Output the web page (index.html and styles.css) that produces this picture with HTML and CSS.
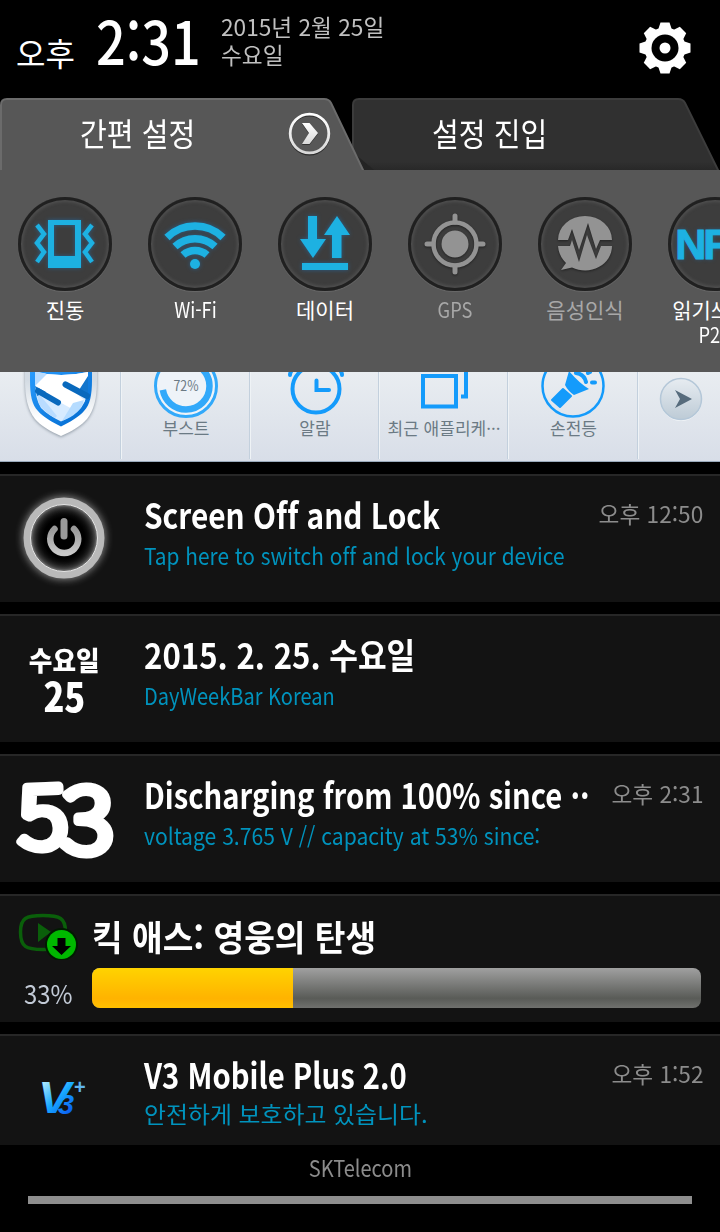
FILE: index.html
```html
<!DOCTYPE html>
<html lang="ko">
<head>
    <meta charset="UTF-8">
    <meta name="viewport" content="width=device-width, initial-scale=1.0">
    <title>알림</title>
    <link rel="stylesheet" href="styles.css">
</head>
<body>

    <header class="status">
        <span class="ampm">오후</span>
        <span class="clock">2:31</span>
        <div class="date">
            <div class="date-line">2015년 2월 25일</div>
            <div class="date-line">수요일</div>
        </div>
        <svg class="gear" width="52" height="52" viewBox="-26 -26 52 52">
            <g fill="#fff">
                <circle r="20.5"/>
                <g id="teeth">
                    <path d="M-7 -18L-4.5 -25.5H4.5L7 -18Z"/>
                    <path d="M-7 18L-4.5 25.5H4.5L7 18Z"/>
                    <path d="M-18 -7L-25.5 -4.5V4.5L-18 7Z"/>
                    <path d="M18 -7L25.5 -4.5V4.5L18 7Z"/>
                </g>
                <use href="#teeth" transform="rotate(45)"/>
            </g>
            <circle r="13.5"/>
            <circle r="5.5" fill="#fff"/>
        </svg>
    </header>

    <nav class="tabs">
        <svg class="tabs-bg" width="720" height="72" viewBox="0 0 720 72">
            <defs>
                <linearGradient id="tabShade" x1="0" y1="0" x2="0" y2="1">
                    <stop offset=".86" stop-color="#303030"/>
                    <stop offset="1" stop-color="#262626"/>
                </linearGradient>
                <linearGradient id="metal" x1="0" y1="0" x2="0" y2="1">
                    <stop offset="0" stop-color="#fff"/>
                    <stop offset="1" stop-color="#d8d8d8"/>
                </linearGradient>
            </defs>
            <path d="M353 74V7Q353 1 359 1H678Q683 1 685 5L719 74Z" fill="url(#tabShade)" stroke="#3c3c3c" stroke-width="2"/>
            <path d="M355 56L374 72H360Z" fill="#242424"/>
            <path d="M1 74V7Q1 1 7 1H324Q329 1 331 5L364 74Z" fill="#575757" stroke="#6b6b6b" stroke-width="2"/>
            <circle cx="309.500" cy="37" r="19.500" fill="none" stroke="#2c2c2c" stroke-width="2"/>
            <circle cx="309.500" cy="35.500" r="19.300" fill="none" stroke="url(#metal)" stroke-width="2.800"/>
            <path d="M302 26H309.500L318 36L309.500 47H302L309 36Z" fill="#333"/>
            <path d="M302 25H309.500L318 35L309.500 46H302L309 35Z" fill="url(#metal)"/>
        </svg>
        <a class="tab">간편 설정</a>
        <a class="tab">설정 진입</a>
    </nav>

    <section class="quick">
        <div class="toggle on">
            <div class="knob">
                <svg width="92" height="92" viewBox="-46 -46 92 92">
                    <path fill-rule="evenodd" d="M-17 -24H16V24H-17ZM-11 -19H10V12H-11Z"/>
                    <path class="line" d="M-28 -19L-21 -10L-28 -1L-21 8L-28 18M27 -19L20 -10L27 -1L20 8L27 18"/>
                </svg>
            </div>
            <span class="toggle-name">진동</span>
        </div>
        <div class="toggle on">
            <div class="knob">
                <svg width="92" height="92" viewBox="-46 -46 92 92">
                    <path class="wave" d="M-28 -6.500A40 40 0 0 1 28 -6.500M-20 2.500A29.500 29.500 0 0 1 20 2.500M-12 11A18 18 0 0 1 12 11"/>
                    <circle cy="20" r="5"/>
                </svg>
            </div>
            <span class="toggle-name latin">Wi-Fi</span>
        </div>
        <div class="toggle on">
            <div class="knob">
                <svg width="92" height="92" viewBox="-46 -46 92 92">
                    <path d="M-17 -28H-8V-5H1L-12 14L-25 -5H-17ZM12 -28L25 -9H16.500V14H7V-9H-1ZM-23 19H23V26H-23Z"/>
                </svg>
            </div>
            <span class="toggle-name">데이터</span>
        </div>
        <div class="toggle">
            <div class="knob">
                <svg width="92" height="92" viewBox="-46 -46 92 92">
                    <circle r="13.500"/>
                    <circle class="ring" r="21.500"/>
                    <path class="cross" d="M0 -28V-22M0 28V22M-28 0H-22M28 0H22"/>
                </svg>
            </div>
            <span class="toggle-name latin">GPS</span>
        </div>
        <div class="toggle">
            <div class="knob">
                <svg width="92" height="92" viewBox="-46 -46 92 92">
                    <path d="M-27 -4A27 24 0 0 1 27 -4H15L11 5L3 -21L-6 6L-13 -15L-17 -4Z"/>
                    <path d="M-27 2H-15L-13 -4L-6 18L2 -9L11 15L16 2H27A27 24.500 0 0 1 -13 23.500L-24 26L-19 19A27 27 0 0 1 -27 2Z"/>
                </svg>
            </div>
            <span class="toggle-name">음성인식</span>
        </div>
        <div class="toggle on">
            <div class="knob"><b class="nfc">NFC</b></div>
            <span class="toggle-name">읽기쓰기/</span>
            <span class="toggle-name second latin">P2P</span>
        </div>
    </section>

    <section class="widget">
        <div class="app shield">
            <svg width="121" height="90" viewBox="0 0 121 90">
                <defs>
                    <linearGradient id="rim" x1="0" y1="0" x2="0" y2="1">
                        <stop offset=".2" stop-color="#d3dbe3"/>
                        <stop offset=".75" stop-color="#fff"/>
                    </linearGradient>
                    <linearGradient id="blue" x1="0" y1="0" x2="1" y2="1">
                        <stop offset="0" stop-color="#2a9dff"/>
                        <stop offset="1" stop-color="#0068cc"/>
                    </linearGradient>
                </defs>
                <path class="rim" d="M25 -6H97V8C97 26 94 38 87 47C82 53 71 60 61 64C51 60 40 53 35 47C28 38 25 26 25 8Z" fill="url(#rim)"/>
                <path d="M30 -6H92V8C92 23 90 33 84 39C79 45 70 50 61 54.500C52 50 43 45 38 39C32 33 30 23 30 8Z" fill="url(#blue)"/>
                <path d="M35 0Q61 6 88 0V8C88 22 86 29 81 36C76 41 69 46 61 49.500C53 46 46 41 41 36C37 29 35 22 35 8Z" fill="#d7ebff"/>
                <path d="M35 0Q61 6 88 0V22L67 13L85 29L74 38L36 17Z" fill="#fff"/>
                <path d="M36 18L57 44L55 46Q44 40 39 32Z" fill="#b9dcff"/>
                <path d="M62 49L73 31L84 28Q81 42 62 49Z" fill="#b6dcff"/>
                <path d="M35 -1L47 2L35 14Z" fill="#b9dcff"/>
                <path d="M35 14L46 20L37 24ZM88 4V22L79 18Z" fill="#1275cc"/>
                <path d="M38 19L58 30.500M65.500 12.500L87 24" fill="none" stroke="#0969bd" stroke-width="6" stroke-linecap="round"/>
            </svg>
        </div>
        <div class="app">
            <svg width="129" height="46" viewBox="122 0 129 46">
                <circle cx="186" cy="14" r="30.500" fill="#eef3f8" stroke="#32a9fa" stroke-width="3"/>
                <circle cx="186" cy="14" r="23.500" fill="none" stroke="#32a9fa" stroke-width="6.500" stroke-dasharray="106 42" transform="rotate(-90 186 14)"/>
                <text class="boost" x="186" y="18.500" textLength="25" lengthAdjust="spacingAndGlyphs">72%</text>
            </svg>
            <span class="app-name">부스트</span>
        </div>
        <div class="app">
            <svg width="129" height="46" viewBox="251 0 129 46">
                <circle cx="316" cy="17" r="23.500" class="draw"/>
                <path d="M316.500 8.500V18H329" class="draw"/>
                <path d="M290 3Q290 0 293 -3M342 3Q342 0 339 -3" class="draw"/>
            </svg>
            <span class="app-name">알람</span>
        </div>
        <div class="app">
            <svg width="129" height="46" viewBox="380 0 129 46">
                <path d="M423 4H456V34.500H423ZM466 -4V24.500H461" class="draw square"/>
            </svg>
            <span class="app-name">최근 애플리케···</span>
        </div>
        <div class="app">
            <svg width="130" height="46" viewBox="509 0 130 46">
                <circle cx="573" cy="14" r="30.500" class="draw thin"/>
                <path d="M552 28L563 17L571 24L560 35Z" fill="#149bfb" stroke="#149bfb" stroke-width="2" stroke-linejoin="round"/>
                <path d="M565 13L569 -1Q579 11 589 17L574 23Q568 19 565 13Z" fill="#149bfb"/>
                <path d="M576 1Q584 2 586 10M592 10.500H595M588 1L590 0" class="draw"/>
            </svg>
            <span class="app-name">손전등</span>
        </div>
        <div class="app more">
            <svg width="44" height="46" viewBox="-22 -22 44 46">
                <defs>
                    <linearGradient id="btn" x1="0" y1="0" x2="0" y2="1">
                        <stop offset="0" stop-color="#e7ecf1"/>
                        <stop offset="1" stop-color="#bdcbd6"/>
                    </linearGradient>
                </defs>
                <circle cy="1" r="21" fill="#f0f4f7"/>
                <circle r="20.500" fill="url(#btn)" stroke="#b4c7d8" stroke-width="1.500"/>
                <path d="M-6 -9L11 0L-6 9L-1 0Z" fill="#566b7c"/>
            </svg>
        </div>
    </section>

    <main class="list">
        <article class="note">
            <div class="icon">
                <svg width="108" height="108" viewBox="-54 -53 108 108">
                    <defs>
                        <radialGradient id="dark">
                            <stop offset=".6" stop-color="#000"/>
                            <stop offset=".9" stop-color="#1c1c1c"/>
                            <stop offset="1" stop-color="#555"/>
                        </radialGradient>
                        <linearGradient id="steel" x1="0" y1="0" x2="0" y2="1">
                            <stop offset="0" stop-color="#999"/>
                            <stop offset="1" stop-color="#c8c8c8"/>
                        </linearGradient>
                    </defs>
                    <circle r="34" fill="url(#dark)"/>
                    <circle class="glow" r="37" fill="none" stroke="#b9b9b9" stroke-width="7"/>
                    <circle r="33.500" fill="none" stroke="#e4e4e4" stroke-width="1"/>
                    <path d="M-9.500 -9A14 14 0 1 0 10 -9" fill="none" stroke="url(#steel)" stroke-width="6.500" stroke-linecap="round"/>
                    <path d="M0 -16.500V-2" stroke="#999" stroke-width="7" stroke-linecap="round"/>
                </svg>
            </div>
            <div class="body">
                <div class="head"><h2 class="title t-screen">Screen Off and Lock</h2><time class="time">오후 12:50</time></div>
                <p class="text t1">Tap here to switch off and lock your device</p>
            </div>
        </article>

        <article class="note">
            <div class="icon day"><span class="day-name">수요일</span><span class="day-num">25</span></div>
            <div class="body">
                <div class="head"><h2 class="title t-date">2015. 2. 25. 수요일</h2></div>
                <p class="text t2">DayWeekBar Korean</p>
            </div>
        </article>

        <article class="note">
            <div class="icon">
                <svg class="level" width="128" height="126" viewBox="0 756 128 126">
                    <text x="18" y="848" textLength="50" lengthAdjust="spacingAndGlyphs" transform="rotate(-2 43 818)">5</text>
                    <text x="61" y="853" textLength="53" lengthAdjust="spacingAndGlyphs" class="three">3</text>
                </svg>
            </div>
            <div class="body">
                <div class="head"><h2 class="title t-charge">Discharging from 100% since ··</h2><time class="time">오후 2:31</time></div>
                <p class="text t3">voltage 3.765 V // capacity at 53% since:</p>
            </div>
        </article>

        <article class="note download">
            <div class="side">
                <svg width="60" height="48" viewBox="18 912 60 48">
                    <path d="M43 915.500C60 915.500 65.500 918 65.500 932C65.500 947 60 949.500 43 949.500C26 949.500 20.500 947 20.500 932C20.500 918 26 915.500 43 915.500Z" fill="none" stroke="#0a5f0a" stroke-width="3.500"/>
                    <path d="M38 923L51 932L38 942Z" fill="#0a5f0a"/>
                    <circle cx="61.500" cy="944.500" r="16.500" fill="#001a00"/>
                    <circle cx="61.500" cy="944.500" r="14.500" fill="#00b800"/>
                    <path d="M57.500 938H65.500V946H71L61.500 955L52 946H57.500Z"/>
                </svg>
                <span class="percent">33%</span>
            </div>
            <div class="body">
                <h2 class="title t-movie">킥 애스: 영웅의 탄생</h2>
                <div class="bar"><div class="bar-fill" style="width: 33%"></div></div>
            </div>
        </article>

        <article class="note last">
            <div class="icon">
                <svg class="v3" width="128" height="109" viewBox="0 1036 128 109">
                    <defs>
                        <linearGradient id="v3fill" gradientUnits="userSpaceOnUse" x1="42" y1="1082" x2="74" y2="1114">
                            <stop offset="0" stop-color="#b4ecff"/>
                            <stop offset=".5" stop-color="#16a8ff"/>
                            <stop offset="1" stop-color="#0a50f0"/>
                        </linearGradient>
                    </defs>
                    <text class="v" x="38" y="1113" textLength="33" lengthAdjust="spacingAndGlyphs">V</text>
                    <text class="n" x="58" y="1114" textLength="16" lengthAdjust="spacingAndGlyphs">3</text>
                    <text class="plus" x="74" y="1094">+</text>
                </svg>
            </div>
            <div class="body">
                <div class="head"><h2 class="title t-v3">V3 Mobile Plus 2.0</h2><time class="time">오후 1:52</time></div>
                <p class="text t4">안전하게 보호하고 있습니다.</p>
            </div>
        </article>
    </main>

    <footer class="carrier">
        <span class="carrier-name">SKTelecom</span>
        <div class="handle"></div>
    </footer>

</body>
</html>
```
FILE: styles.css
```css
* { box-sizing: border-box; }

body {
    margin: 0;
    width: 720px;
    height: 1232px;
    overflow: hidden;
    background: #000;
    color: #fff;
    font-family: "Noto Sans CJK KR", "Noto Sans", sans-serif;
    font-variant-ligatures: none;
}
h2, p { margin: 0; }
svg { display: block; flex: none; }

/* Hora y fecha */
.status {
    height: 98px;
    display: flex;
    white-space: nowrap;
}
.ampm {
    width: 96px;
    padding-left: 16px;
    font-size: 32px;
    line-height: 104px;
}
.clock {
    width: 125px;
    font-size: 60px;
    font-weight: 500;
    line-height: 77px;
    transform: scaleX(.87);
    transform-origin: left;
}
.date {
    flex: 1;
    padding-top: 12px;
    font-size: 23px;
    color: #c0c0c0;
}
.date-line {
    line-height: 28px;
    transform: scaleX(.985);
    transform-origin: left;
}
.gear { margin: 22px 29px 0 0; }

/* Pestañas */
.tabs {
    position: relative;
    height: 72px;
    display: grid;
    grid-template-columns: 352px 368px;
}
.tabs-bg {
    position: absolute;
    top: 0;
    left: 0;
}
.tab {
    position: relative;
    padding-left: 80px;
    font-size: 32px;
    line-height: 68px;
    white-space: nowrap;
    transform: scaleX(.91);
    transform-origin: 80px 50%;
}

/* Accesos rapidos */
.quick {
    height: 202px;
    padding-top: 27px;
    display: grid;
    grid-template-columns: repeat(6, 130px);
    background: #575757;
    overflow: hidden;
}
.toggle {
    display: flex;
    flex-direction: column;
    align-items: center;
    color: #a8a8a8;
    fill: #939393;
    stroke: #939393;
}
.toggle.on {
    color: #fff;
    fill: #1db1e2;
    stroke: #1db1e2;
}
.knob {
    width: 94px;
    height: 94px;
    border-radius: 50%;
    background: #3d3d3d;
    box-shadow: inset 0 0 0 3px #202020, inset 0 0 3px 5px #4e4e4e, 0 1px 1px #6a6a6a;
    display: flex;
    justify-content: center;
    align-items: center;
}
.knob svg { stroke-width: 0; filter: drop-shadow(0 1px 1px #222); }
.on .knob svg { filter: drop-shadow(0 0 2px #2a5f8a); }
.knob .line { fill: none; stroke-width: 4.5; }
.knob .wave { fill: none; stroke-width: 7.5; }
.knob .ring { fill: none; stroke-width: 4.5; }
.knob .cross { fill: none; stroke-width: 5; stroke-linecap: round; }
.nfc {
    font: bold 43px/42px "Liberation Sans", sans-serif;
    color: #1db1e2;
    text-shadow: 0 0 4px #2a5f8a;
    letter-spacing: -3px;
    -webkit-text-stroke: 1px #1db1e2;
}
.toggle-name {
    margin-top: 6px;
    font-size: 21px;
    line-height: 25px;
    text-align: center;
    white-space: nowrap;
}
.toggle-name.second { margin-top: 0; }
.toggle-name.latin { transform: scaleX(.87); }

/* Barra de widgets */
.widget {
    height: 90px;
    display: grid;
    grid-template-columns: 120px 129px 129px 129px 130px 83px;
    background: linear-gradient(#e9edf1, #d8dee8);
    border-bottom: 1px solid #9aaabb;
    overflow: hidden;
}
.app {
    height: 87px;
    padding-left: 2px;
    display: flex;
    flex-direction: column;
    align-items: center;
    border-left: 1px solid #c3d0dd;
    box-shadow: inset 1px 0 #eff3f6;
}
.app.shield { padding: 0; border: 0; box-shadow: none; }
.app.more { padding: 5px 0 0 4px; }
.app-name {
    font-size: 17px;
    line-height: 20px;
    color: #6b7a84;
    white-space: nowrap;
}
.rim { filter: drop-shadow(0 1px 1.5px #8d98a3); }
.boost { font-size: 14px; fill: #6b7a84; text-anchor: middle; }
.draw { fill: none; stroke: #149bfb; stroke-width: 4; stroke-linecap: round; }
.draw.square { stroke-linecap: butt; }
.draw.thin { stroke-width: 2.5; }

/* Notificaciones */
.list {
    padding-top: 12px;
    display: flex;
    flex-direction: column;
    gap: 12px;
}
.note {
    height: 128px;
    display: flex;
    background: #131313;
    border-top: 2px solid #272727;
}
.note.last { height: 111px; }
.icon {
    width: 128px;
    flex: none;
    display: flex;
    justify-content: center;
    align-items: center;
}
.body {
    flex: 1;
    min-width: 0;
    padding: 17px 17px 0 16px;
}
.head { display: flex; }
.title {
    flex: 1;
    width: 0;
    font-size: 35px;
    font-weight: 700;
    line-height: 41px;
    white-space: nowrap;
    transform-origin: left;
}
.t-screen { transform: scaleX(.852); }
.t-date { transform: scaleX(.89); }
.t-charge { transform: scaleX(.835); }
.t-movie { transform: scaleX(.952); line-height: 40px; }
.t-v3 { transform: scaleX(.835); }
.time {
    font-size: 23px;
    line-height: 41px;
    color: #8c8c8c;
    white-space: nowrap;
    transform: scaleX(.985);
    transform-origin: right;
}
.text {
    font-size: 23px;
    line-height: 42px;
    color: #0093bd;
    white-space: nowrap;
    transform-origin: left;
}
.t1 { transform: scaleX(.907); }
.t2 { transform: scaleX(.87); }
.t3 { transform: scaleX(.917); }
.t4 { transform: scaleX(1.038); line-height: 38px; }
.glow { filter: drop-shadow(0 0 4px #aaa); }

.day {
    flex-direction: column;
    font-weight: 900;
}
.day-name { font-size: 27px; line-height: 32px; transform: scaleX(.95); }
.day-num { font-size: 40px; line-height: 38px; transform: scaleX(.86); }

.level {
    font-size: 84px;
    font-weight: 200;
    fill: #fff;
    stroke: #fff;
    stroke-width: 9;
    stroke-linejoin: round;
}
.level .three { font-size: 89px; }

.side { width: 92px; padding: 16px 0 0 18px; }
.percent {
    display: block;
    padding-left: 6px;
    font-size: 26px;
    line-height: 65px;
    color: #c2cad6;
    transform: scaleX(.92);
    transform-origin: 6px 50%;
}
.download .body { padding: 20px 19px 0 0; }
.download .title { width: auto; }
.bar {
    height: 40px;
    margin-top: 12px;
    border-radius: 8px;
    overflow: hidden;
    background: linear-gradient(#a0a0a0, #595b57 76%, #70716e);
}
.bar-fill { height: 100%; background: linear-gradient(#ffd300, #ffb300 76%, #ffc000); }

.v3 {
    font-family: "Liberation Sans", sans-serif;
    font-weight: 700;
    font-style: italic;
    fill: url(#v3fill);
}
.v3 .v { font-size: 45px; }
.v3 .n { font-size: 28px; }
.v3 .plus { font-size: 20px; font-style: normal; fill: #5eb4ee; }

/* Operador */
.carrier {
    height: 87px;
    display: flex;
    flex-direction: column;
    align-items: center;
}
.carrier-name {
    font-size: 23px;
    line-height: 44px;
    color: #8c8c8c;
    transform: scaleX(.87);
}
.handle {
    width: 664px;
    height: 8px;
    margin-top: 7px;
    background: #8e8e8e;
}
```
